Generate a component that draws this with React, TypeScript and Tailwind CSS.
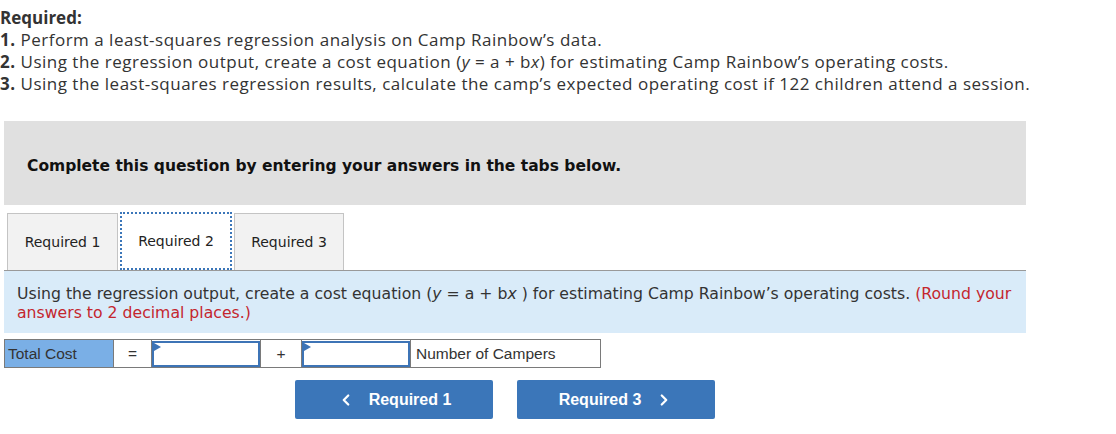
import { ChevronLeft, ChevronRight } from "lucide-react";

function AnswerInput() {
  return (
    <td className="w-[109px] p-0 border border-[#7a7a7a]">
      <div className="relative h-[26px] border-2 border-[#3d74b6] bg-white">
        <span className="absolute left-0 top-0 h-0 w-0 border-y-[4px] border-l-[7px] border-y-transparent border-l-[#3d74b6]" />
      </div>
    </td>
  );
}

export default function App() {
  return (
    <div className="w-[1116px] h-[434px] bg-white text-[#333] overflow-hidden">
      <div className="pt-[7px] text-[17px] leading-[22px] tracking-[0.5px] text-[#333] font-['Open_Sans',sans-serif]">
        <p className="font-bold tracking-normal">Required:</p>
        <p>
          <b>1.</b> Perform a least-squares regression analysis on Camp Rainbow’s data.
        </p>
        <p>
          <b>2.</b> Using the regression output, create a cost equation (<i>y</i> = a + b<i>x</i>) for estimating Camp Rainbow’s operating costs.
        </p>
        <p>
          <b>3.</b> Using the least-squares regression results, calculate the camp’s expected operating cost if 122 children attend a session.
        </p>
      </div>

      <div className="ml-[4px] mt-[26px] w-[1022px] h-[84px] bg-[#e0e0e0] flex items-center pl-[23px] pt-[7px] font-['DejaVu_Sans',Verdana,sans-serif] font-bold text-[15.5px] text-[#111]">
        Complete this question by entering your answers in the tabs below.
      </div>

      <div className="ml-[7px] mt-[7px] flex items-end font-['DejaVu_Sans',Verdana,sans-serif] text-[14px] text-[#222]">
        <div className="w-[111px] h-[57px] flex items-center justify-center border border-b-0 border-[#c4c4c4] bg-[#f2f2f2]">Required 1</div>
        <div className="ml-[2px] w-[112px] h-[58px] flex items-center justify-center border-2 border-dotted border-[#3b76b9] bg-white">Required 2</div>
        <div className="ml-[2px] w-[110px] h-[57px] flex items-center justify-center border border-b-0 border-[#c4c4c4] bg-[#f2f2f2]">Required 3</div>
      </div>

      <div className="ml-[4px] w-[1022px] h-[63px] border-t border-[#999] bg-[#d9ebf9] px-[13px] pt-[13px] font-['DejaVu_Sans',Verdana,sans-serif] text-[15.7px] leading-[19px] text-[#333]">
        Using the regression output, create a cost equation (<i>y</i> = a + b<i>x</i> ) for estimating Camp Rainbow’s operating costs.{" "}
        <span className="text-[#c4262e]">(Round your answers to 2 decimal places.)</span>
      </div>

      <table className="ml-[4px] mt-[6px] border-collapse font-['Liberation_Sans',Arial,sans-serif] text-[15.5px] text-[#333]">
        <tbody>
          <tr className="h-[28px]">
            <td className="w-[109px] border border-[#7a7a7a] bg-[#7aafe6] px-[3px] py-0">Total Cost</td>
            <td className="w-[38px] border border-[#7a7a7a] text-center py-0">=</td>
            <AnswerInput />
            <td className="w-[41px] border border-[#7a7a7a] text-center py-0">+</td>
            <AnswerInput />
            <td className="w-[190px] border border-[#7a7a7a] px-[5px] py-0">Number of Campers</td>
          </tr>
        </tbody>
      </table>

      <div className="mt-[12px] ml-[295px] flex gap-[24px] font-['Liberation_Sans',Arial,sans-serif] font-bold text-[16px] text-white">
        <button className="w-[198px] h-[39px] rounded-[2px] bg-[#3b76b9] flex items-center justify-center gap-[14px]">
          <ChevronLeft size={18} strokeWidth={3} />
          Required 1
        </button>
        <button className="w-[198px] h-[39px] rounded-[2px] bg-[#3b76b9] flex items-center justify-center gap-[14px]">
          Required 3
          <ChevronRight size={18} strokeWidth={3} />
        </button>
      </div>
    </div>
  );
}
